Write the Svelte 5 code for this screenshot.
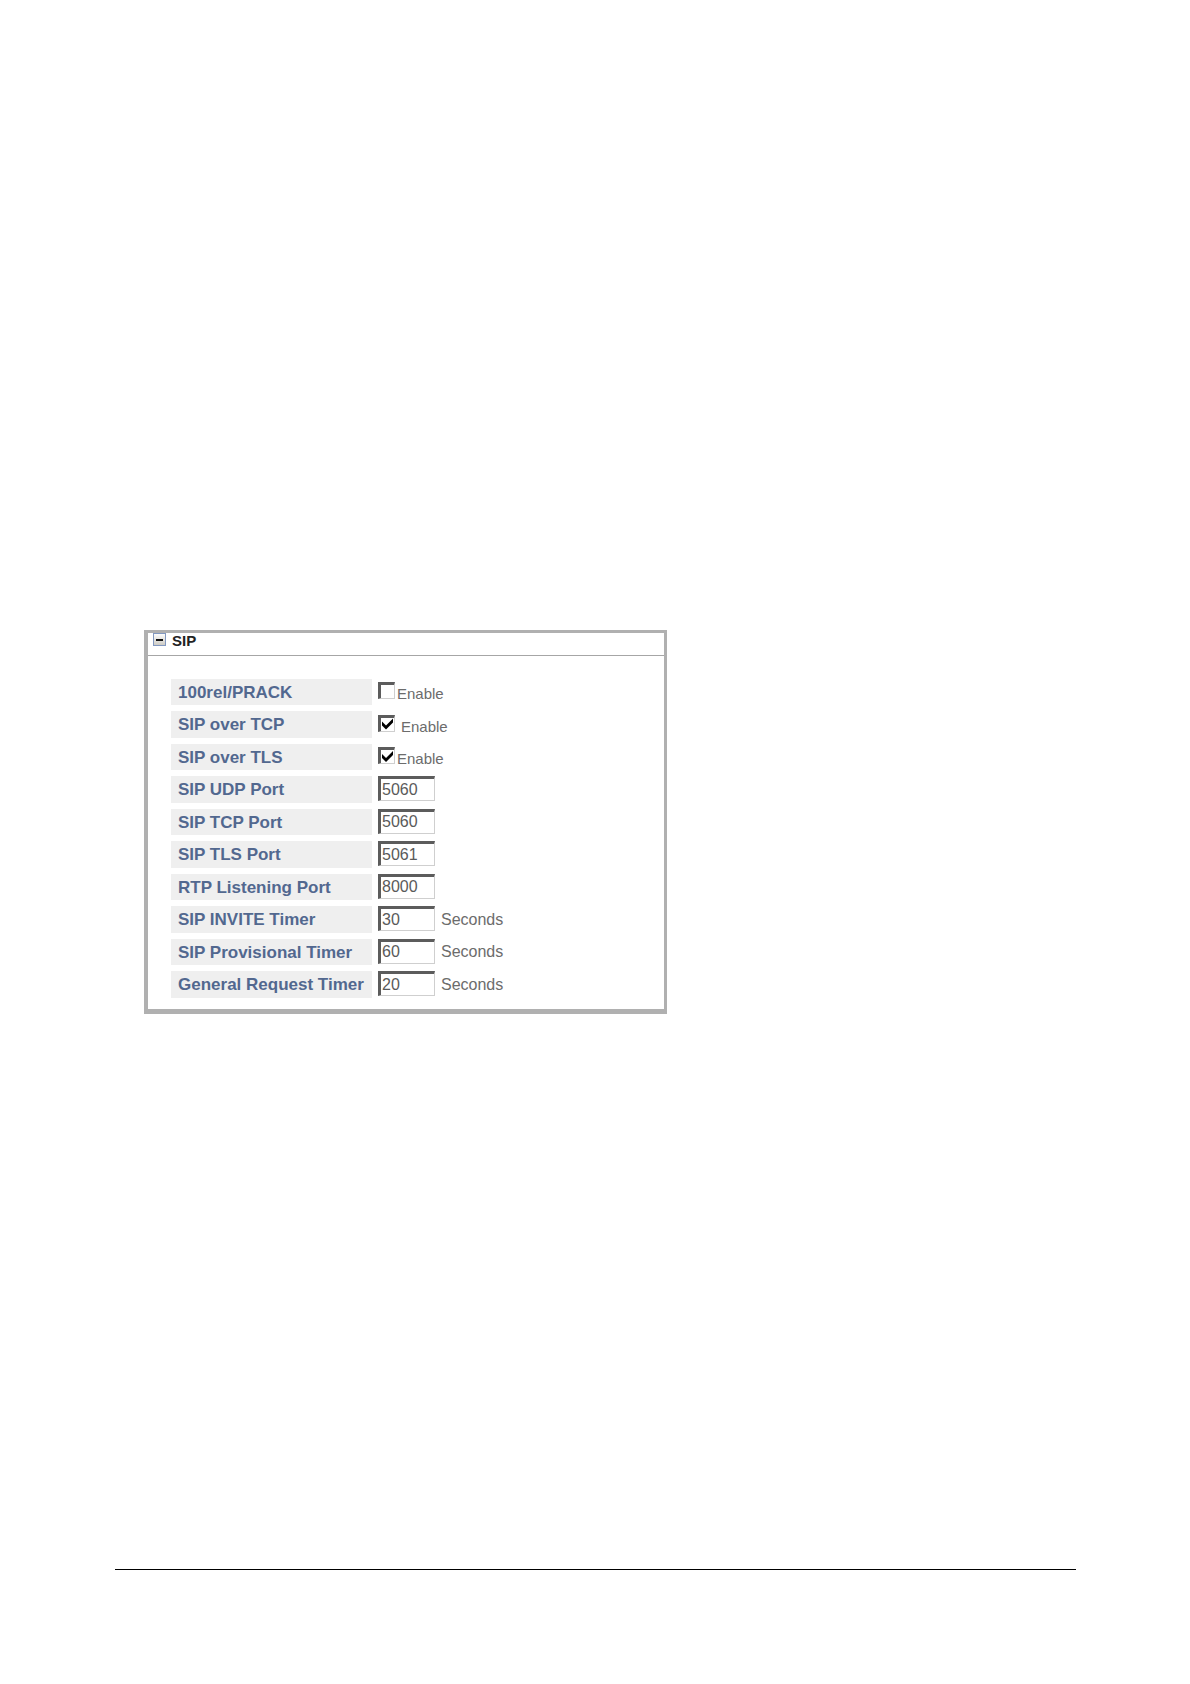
<script lang="ts">
  type Toggle = { id: string; label: string; checked: boolean; spaced?: boolean };
  type Field = { id: string; label: string; value: string; unit?: string };

  let open = $state(true);

  let toggles: Toggle[] = $state([
    { id: 'prack', label: '100rel/PRACK', checked: false },
    { id: 'sip-tcp', label: 'SIP over TCP', checked: true, spaced: true },
    { id: 'sip-tls', label: 'SIP over TLS', checked: true },
  ]);

  let fields: Field[] = $state([
    { id: 'udp-port', label: 'SIP UDP Port', value: '5060' },
    { id: 'tcp-port', label: 'SIP TCP Port', value: '5060' },
    { id: 'tls-port', label: 'SIP TLS Port', value: '5061' },
    { id: 'rtp-port', label: 'RTP Listening Port', value: '8000' },
    { id: 'invite-timer', label: 'SIP INVITE Timer', value: '30', unit: 'Seconds' },
    { id: 'provisional-timer', label: 'SIP Provisional Timer', value: '60', unit: 'Seconds' },
    { id: 'request-timer', label: 'General Request Timer', value: '20', unit: 'Seconds' },
  ]);
</script>

<div class="page">
  <main>
    <section class="panel">
      <header>
        <button type="button" class="collapse" aria-label="SIP" aria-expanded={open} onclick={() => (open = !open)}>
          <svg viewBox="0 0 13 13" width="13" height="13" aria-hidden="true">
            <defs>
              <linearGradient id="face" x1="0" y1="0" x2="0" y2="1">
                <stop offset="0" stop-color="#ffffff" />
                <stop offset="1" stop-color="#cbc9c2" />
              </linearGradient>
            </defs>
            <rect x="0.5" y="0.5" width="12" height="12" fill="url(#face)" stroke="#8298c0" />
            <rect x="3" y="6" width="7" height="2" fill="#111" />
            {#if !open}
              <rect x="6" y="3" width="2" height="7" fill="#111" />
            {/if}
          </svg>
        </button>
        <h2>SIP</h2>
      </header>

      {#if open}
        <form>
          {#each toggles as t (t.id)}
            <div class="row">
              <label class="name" for={t.id}>{t.label}</label>
              <input type="checkbox" id={t.id} bind:checked={t.checked} />
              <label class="enable" class:spaced={t.spaced} for={t.id}>Enable</label>
            </div>
          {/each}
          {#each fields as f (f.id)}
            <div class="row">
              <label class="name" for={f.id}>{f.label}</label>
              <input type="text" id={f.id} bind:value={f.value} />
              {#if f.unit}<span class="unit">{f.unit}</span>{/if}
            </div>
          {/each}
        </form>
      {/if}
    </section>
  </main>
  <footer></footer>
</div>

<style>
  :global(body) {
    margin: 0;
    background: #fff;
  }

  .page {
    box-sizing: border-box;
    min-height: 100vh;
    display: flex;
    flex-direction: column;
    padding: 630px 114px 0 115px;
    font-family: 'Liberation Sans', Arial, sans-serif;
    font-size: 16px;
    color: #6c6c6c;
  }

  main {
    padding-left: 29px;
  }

  .panel {
    box-sizing: border-box;
    max-width: 523px;
    border: solid #b0b0b0;
    border-width: 3px 3px 5px 4px;
  }

  header {
    display: flex;
    align-items: flex-start;
    gap: 6px;
    padding: 0 5px 7px;
    border-bottom: 1px solid #a6a6a6;
  }

  .collapse {
    display: block;
    padding: 0;
    border: 0;
    background: none;
    line-height: 0;
  }

  h2 {
    margin: 0;
    font-size: 15px;
    line-height: 15px;
    color: #222;
  }

  form {
    display: flex;
    flex-direction: column;
    gap: 6px;
    padding: 23px 19px 11px 23px;
  }

  .row {
    display: flex;
    align-items: center;
    height: 26px;
  }

  .row:nth-child(even) {
    height: 27px;
  }

  .name {
    box-sizing: border-box;
    width: 201px;
    height: 100%;
    margin-right: 6px;
    padding-left: 7px;
    background: #efefef;
    color: #52688f;
    font-size: 17px;
    font-weight: 700;
    line-height: 27px;
    white-space: nowrap;
  }

  input {
    box-sizing: border-box;
    margin: 0;
    border: solid;
    border-width: 3px 1px 1px 3px;
    border-color: #5c5c5c #cfcfcf #cfcfcf #5c5c5c;
    border-radius: 0;
    background: #fff;
  }

  input[type='text'] {
    width: 57px;
    height: 25px;
    margin-bottom: 2px;
    padding: 0 1px;
    font: inherit;
    color: #5a5a5a;
  }

  input[type='checkbox'] {
    appearance: none;
    width: 17px;
    height: 17px;
    margin-bottom: 3px;
  }

  input[type='checkbox']:checked::before {
    content: '';
    display: block;
    width: 13px;
    height: 13px;
    background: #000;
    clip-path: polygon(1px 4px, 5px 8px, 12px 1px, 12px 5px, 5px 12px, 1px 8px);
  }

  .enable {
    margin-left: 2px;
    padding-top: 3px;
    font-size: 15px;
  }

  .enable.spaced {
    margin-left: 6px;
  }

  .unit {
    margin-left: 6px;
  }

  footer {
    height: 114px;
    margin-top: auto;
    border-top: 1px solid #000;
  }
</style>
